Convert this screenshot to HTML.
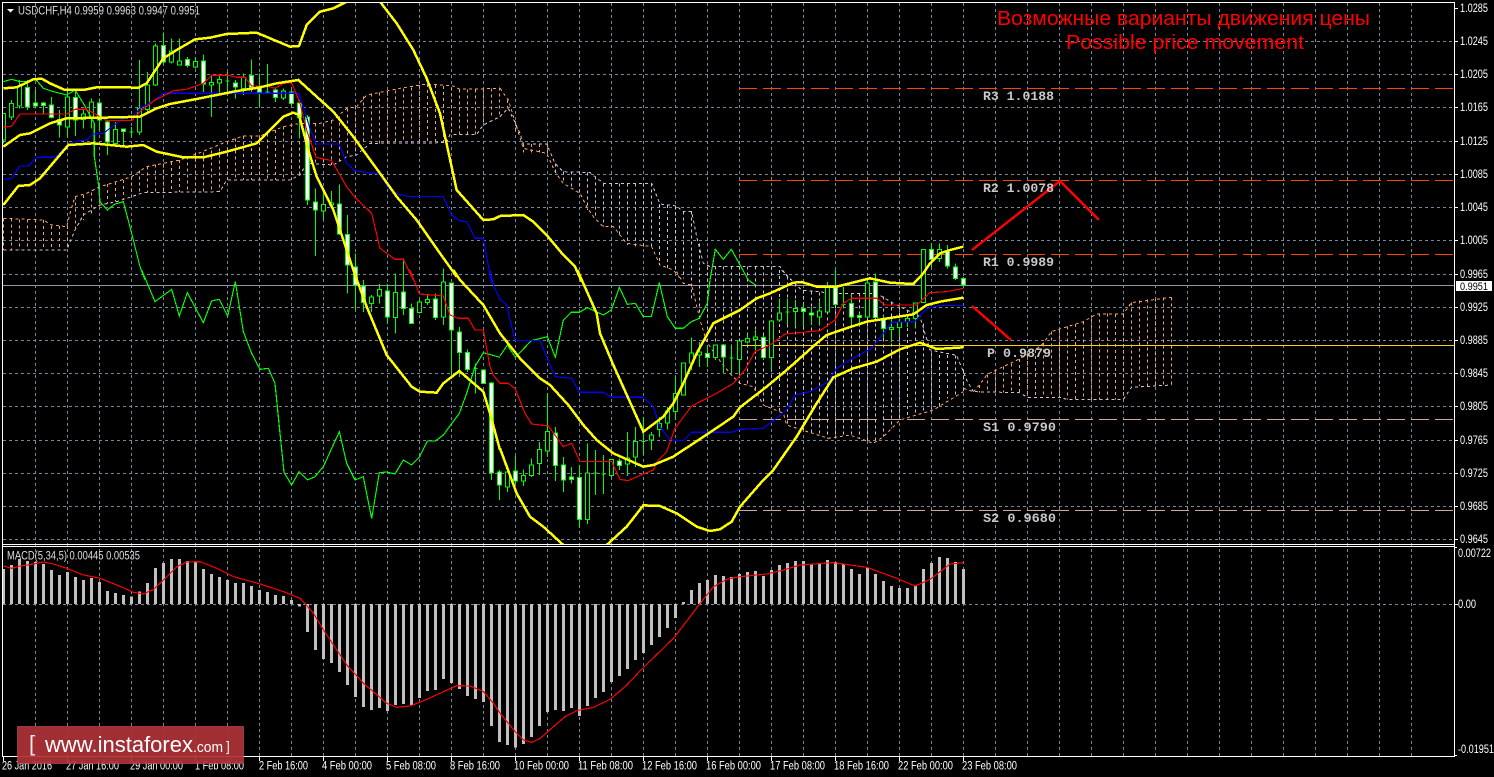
<!DOCTYPE html>
<html><head><meta charset="utf-8"><title>USDCHF H4</title>
<style>
html,body{margin:0;padding:0;background:#000;width:1494px;height:777px;overflow:hidden}
svg{display:block;position:absolute;left:0;top:0}
.y{fill:none;stroke:#ff0;stroke-width:7.5}
.r{fill:none;stroke:#f00;stroke-width:3.5}
.b{fill:none;stroke:#00f;stroke-width:3.5}
.g{fill:none;stroke:#0f0;stroke-width:3.5}
.w{fill:none;stroke:#0f0;stroke-width:3}
.wb{fill:#fff;stroke:#0f0;stroke-width:3}
.bb{fill:#000;stroke:#0f0;stroke-width:3}
.sa{fill:none;stroke:#f4a460;stroke-width:3;stroke-dasharray:9 9}
.th{fill:none;stroke:#d8bfd8;stroke-width:3;stroke-dasharray:9 9}
.m{fill:none;stroke:#c0c0c0;stroke-width:9}
.ax{font:11.5px "Liberation Sans",sans-serif;fill:#fff}
.lv{font:bold 13px "Liberation Mono",monospace;fill:#c8c8c8}
</style></head><body>
<svg width="1494" height="777" viewBox="0 0 1494 777" xmlns="http://www.w3.org/2000/svg" shape-rendering="crispEdges">
<rect width="1494" height="777" fill="#000"/>
<defs><clipPath id="c"><rect x="3" y="3" width="1451" height="541"/></clipPath></defs>
<!-- grid -->
<path fill="none" stroke="#778899" stroke-dasharray="3 3" d="M35.5 3v753m32-753v753m32-753v753m32-753v753m32-753v753m32-753v753m32-753v753m32-753v753m32-753v753m32-753v753m32-753v753m32-753v753m32-753v753m32-753v753m32-753v753m32-753v753m32-753v753m32-753v753m32-753v753m32-753v753m32-753v753m32-753v753m32-753v753m32-753v753m32-753v753m32-753v753m32-753v753m32-753v753m32-753v753m32-753v753m32-753v753m32-753v753m32-753v753m32-753v753m32-753v753m32-753v753m32-753v753m32-753v753m32-753v753m32-753v753m32-753v753m32-753v753m32-753v753m32-753v753"/>
<path fill="none" stroke="#778899" stroke-dasharray="3 3" d="M3 41.5H1454M3 74.5H1454M3 107.5H1454M3 141.5H1454M3 174.5H1454M3 207.5H1454M3 240.5H1454M3 274.5H1454M3 307.5H1454M3 340.5H1454M3 373.5H1454M3 406.5H1454M3 440.5H1454M3 473.5H1454M3 506.5H1454M3 539.5H1454M3 604.5H1454"/>
<path fill="none" stroke="#8d96a3" d="M3 285.5H1454"/>
<g clip-path="url(#c)">
<!-- pivots -->
<path fill="none" stroke="#ff4500" stroke-dasharray="18 6" d="M739 88.5H1454M739 180.5H1454M739 254.5H1454"/>
<path fill="none" stroke="#ffd700" d="M739 345.5H1454"/>
<path fill="none" stroke="#d2a89c" stroke-dasharray="18 6" d="M739 419.5H1454M739 510.5H1454"/>
<!-- cloud crop A -->
<g transform="scale(.33333)">
<path class="sa" d="M10 655L130 660L155 675L200 680L210 640L225 590L260 580L300 560L340 548L395 530L440 500L490 490L540 480L600 458L680 425L730 408L780 408L850 380L900 370L960 370L1000 360L1040 325L1070 320L1100 285L1150 275L1200 265L1280 252L1360 258L1380 268L1500 265"/>
<path class="th" d="M10 750L200 750L225 690L250 645L300 615L350 605L395 590L430 578L660 575L680 540L870 540L900 525L920 490L1000 495L1040 470L1070 465L1110 430L1340 428L1350 403L1430 403L1450 375L1500 350"/>
<path class="sa" d="M10 655V750M34 655V750M58 658V750M82 658V750M106 658V750M130 660V750M154 678V750M178 678V750M202 678V750M226 590V690M250 585V660M274 578V640M298 560V620M322 552V610M346 546V605M370 540V600M394 530V590M418 512V580M442 500V578M466 494V578M490 490V578M514 486V578M538 480V576M562 470V576M586 458V576M610 458V576M634 452V576M658 445V576M682 425V540M706 415V540M730 408V540M754 408V540M778 408V540M802 400V540M826 390V540M850 380V540M874 372V540M898 370V525M922 370V490M946 370V490M970 370V492M994 362V495M1018 350V490M1042 325V470M1066 320V465M1090 290V435M1114 280V430M1138 278V430M1162 275V428M1186 272V428M1210 265V428M1234 262V428M1258 255V428M1282 252V428M1306 255V428M1330 258V428M1354 262V403M1378 268V403M1402 268V403M1426 268V403M1450 268V375M1474 265V355M1498 262V350"/>
</g>
<!-- cloud crop G -->
<g transform="translate(500 0) scale(.33333)">
<path class="sa" d="M0 265L25 300L45 365L70 445L140 460L165 515L190 550L240 580L260 620L280 650L310 680L340 680L380 730L455 740L480 795L520 810L545 840"/>
<path class="th" d="M0 350L25 325L60 400L70 432L140 432L165 490L190 515L270 518L310 550L455 550L480 612L530 618L550 635L575 635L590 710L610 790L630 800L840 800L870 840"/>
<path class="sa" d="M22 300V325M46 365V400M70 432V458M94 432V458M118 432V458M142 432V462"/>
<path class="th" d="M166 490V520M190 515V550M214 515V565M238 515V580M262 518V630M286 530V655M310 550V680M334 550V680M358 550V710M382 550V735M406 550V740M430 550V740M454 550V740M478 612V795M502 615V805M526 618V810M550 635V835M574 635V900M598 730V950"/>
</g>
<!-- cloud crop C -->
<g transform="translate(500 270) scale(.33333)">
<path class="sa" d="M530 5L550 40L575 45L600 150L620 215L650 260L690 310L720 340L760 350L790 405L850 430L860 465L985 505L1050 495L1120 520L1150 500L1200 450L1300 420L1390 365"/>
<path class="th" d="M845 0L905 60L1000 70L1130 70L1180 100L1260 140L1290 240L1370 256L1400 330L1420 365"/>
<path class="th" d="M622 -10V215M646 -10V255M670 -10V290M694 -10V310M718 -10V340M742 -10V347M766 -10V360M790 -10V405M814 -10V418M838 0V428M862 20V465M886 40V475M910 60V480M934 65V490M958 68V498M982 70V505M1006 70V505M1030 70V500M1054 70V495M1078 70V505M1102 70V515M1126 70V520M1150 80V500M1174 95V475M1198 110V450M1222 120V440M1246 130V432M1270 160V425M1294 250V418M1318 255V408M1342 255V385M1366 256V375M1390 300V365"/>
</g>
<!-- cloud crop H -->
<g transform="translate(960 280) scale(.33333)">
<path class="sa" d="M40 335L58 315L82 283L130 260L178 237L226 210L250 190L274 155L370 125L410 102L490 102L514 68L634 52"/>
<path class="th" d="M10 290L10 325L40 335L178 338L202 352L300 352L320 358L490 358L514 322L634 315"/>
<path class="sa" d="M58 315V338M82 283V338M106 275V338M130 260V338M154 250V338M178 237V338M202 225V352M226 210V352M250 190V352M274 155V352M298 150V352M322 140V358M346 132V358M370 125V358M394 115V358M418 100V358M442 100V358M466 102V358M490 102V358M514 68V322M538 62V318M562 58V318M586 55V316M610 52V316M634 52V315"/>
</g>
<!-- candles crop A -->
<g transform="translate(.17 .17) scale(.33333)">
<path class="w" d="M10 340V430M34 300V360M58 240V325M82 240V330M106 270V325M130 305V340M154 290V355M178 330V412M202 270V410M226 265V408M250 325V385M274 295V385M298 295V390M322 360V465M346 365V435M370 385V435M394 380V410M388 395h12M418 180V405M442 215V335M466 130V258M490 97V190M514 115V190M538 115V196M562 170V202M586 170V205M610 163V275M634 225V350M658 225V280M682 215V280M676 243h12M706 240V295M730 220V285M754 178V275M778 220V320M802 192V280M796 275h12M826 265V305M850 265V300M874 270V315M898 300V415M922 345V615M946 565V768M970 565V660M994 573V620M1018 553V705M1042 645V880M1066 760V930"/>
<path class="bb" d="M4 340h12v80h-12zM28 310h12v40h-12zM52 258h12v60h-12zM196 290h12v90h-12zM244 342h12v16h-12zM268 305h12v45h-12zM340 388h12v42h-12zM412 325h12v70h-12zM436 255h12v73h-12zM460 138h12v117h-12zM508 152h12v34h-12zM532 182h12v12h-12zM580 184h12v16h-12zM628 247h12v7h-12zM652 238h12v10h-12zM724 232h12v33h-12zM844 272h12v21h-12zM964 613h12v19h-12zM988 608h12v7h-12z"/>
<path class="wb" d="M76 262h12v58h-12zM100 308h12v10h-12zM124 308h12v8h-12zM148 315h12v37h-12zM172 358h12v17h-12zM220 292h12v68h-12zM292 308h12v52h-12zM316 365h12v60h-12zM364 386h12v8h-12zM484 136h12v50h-12zM556 178h12v18h-12zM604 182h12v70h-12zM700 248h12v12h-12zM748 226h12v36h-12zM772 262h12v14h-12zM820 270h12v22h-12zM868 275h12v35h-12zM892 308h12v44h-12zM916 350h12v250h-12zM940 605h12v25h-12zM1012 612h12v90h-12zM1036 703h12v92h-12zM1060 800h12v55h-12z"/>
</g>
<!-- candles crop B -->
<g transform="translate(.17 270.17) scale(.33333)">
<path class="w" d="M1090 30V125M1114 75V125M1138 42V100M1162 42V158M1186 10V190M1210 -35V135M1234 100V162M1258 90V130M1282 75V105M1306 70V150M1330 -5V165M1354 38V315M1378 170V320M1402 238V305M1426 280V370M1420 295h12M1450 297V342M1474 335V630M1498 600V690"/>
<path class="bb" d="M1108 80h12v20h-12zM1132 58h12v19h-12zM1180 67h12v75h-12zM1252 95h12v32h-12zM1276 88h12v9h-12zM1324 35h12v105h-12z"/>
<path class="wb" d="M1084 47h12v50h-12zM1156 62h12v78h-12zM1204 65h12v50h-12zM1228 115h12v45h-12zM1300 87h12v55h-12zM1348 38h12v142h-12zM1372 185h12v62h-12zM1396 247h12v51h-12zM1444 300h12v40h-12zM1468 338h12v270h-12zM1492 605h12v40h-12z"/>
</g>
<!-- candles crop C -->
<g transform="translate(500.17 270.17) scale(.33333)">
<path class="w" d="M22 590V665M46 558V640M70 598V648M94 565V620M118 515V615M142 368V560M166 470V632M190 560V665M214 590V640M238 585V772M262 520V762M286 540V675M280 608h12M310 555V672M304 612h12M334 568V620M358 565V600M382 485V618M406 470V590M430 440V555M424 514h12M454 485V540M478 440V500M502 410V478M526 318V450M550 278V376M574 202V300M598 215V290M622 225V290M646 225V270M670 222V308M694 225V308M688 264h12M718 212V320M742 190V220M766 180V240M790 195V270M814 150V300M838 85V155M862 85V165M856 125h12M886 90V170M910 100V170M934 110V165M958 95V165M982 35V125M1006 0V108M1030 50V115M1024 103h12M1054 72V165M1078 130V170M1102 22V145M1126 10V145M1150 135V205M1174 145V215M1198 145V200M1222 140V170M1246 98V175M1270 -62V97M1294 -80V-10M1318 -80V-25M1342 -75V-5M1366 -20V30M1390 20V50"/>
<path class="bb" d="M16 605h12v45h-12zM64 616h12v16h-12zM88 584h12v32h-12zM112 538h12v42h-12zM136 484h12v58h-12zM256 608h12v140h-12zM328 568h12v48h-12zM376 563h12v19h-12zM400 514h12v46h-12zM448 494h12v16h-12zM472 460h12v18h-12zM496 422h12v36h-12zM520 370h12v54h-12zM544 278h12v96h-12zM568 248h12v30h-12zM592 246h12v8h-12zM640 225h12v37h-12zM712 212h12v56h-12zM736 205h12v10h-12zM760 200h12v8h-12zM808 152h12v110h-12zM832 128h12v22h-12zM880 115h12v9h-12zM952 122h12v18h-12zM976 50h12v75h-12zM1096 38h12v102h-12zM1168 172h12v6h-12zM1192 155h12v17h-12zM1216 145h12v10h-12zM1240 98h12v47h-12zM1264 -62h12v159h-12zM1312 -62h12v27h-12z"/>
<path class="wb" d="M40 602h12v30h-12zM160 488h12v98h-12zM184 584h12v46h-12zM208 620h12v8h-12zM232 622h12v126h-12zM352 572h12v14h-12zM616 250h12v12h-12zM664 224h12v36h-12zM784 202h12v60h-12zM904 115h12v9h-12zM928 128h12v7h-12zM1000 50h12v53h-12zM1048 100h12v40h-12zM1072 136h12v6h-12zM1120 35h12v107h-12zM1144 145h12v30h-12zM1288 -62h12v30h-12zM1336 -58h12v45h-12zM1360 -10h12v35h-12zM1384 25h12v20h-12z"/>
</g>
<!-- indicators crop A -->
<g transform="scale(.33333)">
<path class="g" d="M10 245L35 238L60 245L85 245L105 235L130 265L160 275L200 285L225 270L250 310L283 370L283 470L295 550L300 605L322 630L345 612L370 605L395 700L420 800L435 840"/>
<path class="b" d="M10 538L35 535L60 498L85 498L110 472L165 472L205 435L225 425L260 420L280 402L310 400L370 355L400 350L420 325L465 300L490 280L895 280L910 320L930 385L948 432L1018 432L1040 490L1065 512L1120 520L1140 522L1165 565L1195 583L1230 590L1330 590L1355 645L1380 663L1400 665L1425 715L1450 715L1475 850"/>
<path class="r" d="M10 382L35 378L60 342L200 342L225 328L260 328L300 350L320 362L395 362L420 335L465 300L490 288L520 272L560 268L610 250L635 226L685 226L710 232L735 232L755 258L800 258L825 265L850 250L875 248L900 310L920 390L948 472L995 482L1040 560L1065 592L1115 640L1140 745L1185 778L1210 778L1240 840"/>
<path class="y" d="M10 265L50 262L100 238L125 236L150 250L195 270L250 270L290 262L370 262L415 263L440 250L470 205L490 175L530 150L585 118L630 113L680 102L770 98L810 115L870 140L897 138L920 75L960 35L1000 25L1040 5L1090 -10L1140 5L1190 70L1240 150L1280 235L1320 340L1370 570L1450 660L1480 658L1500 648"/>
<path class="y" d="M10 440L60 405L90 400L150 370L200 355L350 352L420 350L470 325L510 312L600 295L700 275L780 262L830 250L895 240L950 290L1000 335L1060 410L1140 520L1190 590L1250 660L1320 760L1370 830"/>
<path class="y" d="M10 615L55 558L90 555L120 535L205 435L280 430L380 440L430 435L470 455L550 472L610 472L680 455L770 430L850 350L880 338L897 345L925 450L950 530L1000 630L1060 810"/>
</g>
<!-- indicators crop G -->
<g transform="translate(500 0) scale(.33333)">
<path class="y" d="M0 648L70 645L100 665L140 705L190 765L225 800L245 845"/>
</g>
<!-- indicators crop B -->
<g transform="translate(0 270) scale(.33333)">
<path class="g" d="M425 0L465 95L515 58L538 138L562 68L610 158L635 93L658 88L683 138L706 35L730 185L755 250L780 298L805 295L825 340L840 490L852 607L875 645L897 605L922 630L945 620L970 590L1018 485L1040 580L1065 630L1090 620L1115 745L1138 608L1160 606L1185 612L1210 570L1235 585L1258 562L1282 513L1306 513L1330 495L1378 430L1400 370L1425 290L1450 248L1500 262"/>
<path class="b" d="M1470 0L1480 45L1500 88"/>
<path class="r" d="M1230 0L1258 72L1330 78L1350 135L1375 145L1405 145L1425 180L1450 180L1470 290L1480 315L1500 340"/>
<path class="y" d="M1360 0L1380 30L1450 105L1500 190"/>
<path class="y" d="M1060 0L1100 110L1160 255L1235 350L1260 365L1310 368L1330 340L1378 303L1450 365L1470 430L1500 540"/>
</g>
<!-- indicators crop C -->
<g transform="translate(500 270) scale(.33333)">
<path class="g" d="M0 258L22 225L46 262L94 212L142 200L166 262L190 150L214 127L238 127L262 113L310 135L334 120L358 52L382 103L406 100L430 140L454 140L478 38L502 140L526 175L550 175L574 155L598 145L622 100L630 30L646 -62L670 -32L694 -62L745 30L766 45"/>
<path class="b" d="M0 88L20 105L45 212L120 212L165 320L215 325L238 367L310 367L335 382L430 382L460 410L480 470L510 510L550 512L575 487L695 487L720 478L790 475L860 420L885 375L930 365L985 335L1010 295L1050 270L1115 235L1150 190L1175 157L1245 155L1280 115L1320 107L1390 107"/>
<path class="r" d="M0 340L25 340L45 355L75 430L95 462L145 468L190 530L215 520L240 575L335 575L360 628L385 632L430 612L460 600L475 570L500 545L525 475L575 408L650 370L700 340L735 300L765 245L810 225L855 192L960 182L1005 150L1030 100L1055 85L1130 85L1155 105L1250 105L1290 68L1340 65L1390 55"/>
<path class="y" d="M232 0L290 130L300 190L340 285L385 385L430 485L490 440L520 400L550 340L590 250L640 160L720 120L770 85L810 70L880 38L905 36L950 50L1010 50L1090 30L1110 25L1170 38L1240 42L1270 10L1290 -20L1320 -50L1350 -60L1390 -70"/>
<path class="y" d="M0 190L60 265L120 325L150 345L205 405L250 465L290 510L340 550L430 590L460 585L520 560L630 487L700 440L720 412L800 350L860 300L950 220L980 195L1030 178L1100 155L1240 133L1280 105L1320 95L1390 83"/>
<path class="y" d="M0 535L50 670L90 740L130 770L190 825L240 880L280 880L320 825L380 770L430 706L480 708L530 730L590 770L630 783L660 778L695 755L720 710L790 630L820 600L890 500L950 400L1000 322L1060 295L1130 275L1200 238L1260 218L1310 237L1390 232"/>
</g>
<!-- arrows -->
<path fill="none" stroke="#f00" stroke-width="2.4" d="M972 250L1060 181L1099 220M972 306L1011 340"/>
</g>
<!-- MACD crop D -->
<g transform="translate(.17 540) scale(.33333)">
<path class="m" d="M10 87V192M34 75V192M58 57V192M82 63V192M106 66V192M130 72V192M154 90V192M178 105V192M202 96V192M226 111V192M250 120V192M274 114V192M298 126V192M322 153V192M346 159V192M370 165V192M394 170V192M418 155V192M442 129V192M466 84V192M490 69V192M514 57V192M538 57V192M562 63V192M586 63V192M610 87V192M634 102V192M658 111V192M682 120V192M706 129V192M730 129V192M754 138V192M778 150V192M802 156V192M826 165V192M850 168V192M874 180V192M898 192V200M922 192V276M946 192V330M970 192V357M994 192V369M1018 192V396M1042 192V435M1066 192V471M1090 192V501M1114 192V510M1138 192V504M1162 192V513M1186 192V495M1210 192V492M1234 192V495M1258 192V474M1282 192V453M1306 192V450M1330 192V417M1354 192V429M1378 192V447M1402 192V468M1426 192V477M1450 192V486M1474 192V558M1498 192V606"/>
<path class="r" d="M10 78L35 85L60 78L100 72L130 66L160 72L200 85L250 105L300 115L350 135L400 157L430 162L460 148L490 120L530 80L560 66L600 65L650 85L700 110L780 132L850 155L900 175L940 220L970 270L1010 330L1040 375L1090 430L1160 490L1190 502L1230 498L1280 478L1330 455L1370 437L1410 438L1450 455L1480 490L1500 520"/>
</g>
<!-- MACD crop E -->
<g transform="translate(500.17 540) scale(.33333)">
<path class="m" d="M22 192V615M46 192V622M70 192V612M94 192V591M118 192V558M142 192V516M166 192V510M190 192V513M214 192V504M238 192V528M262 192V498M286 192V474M310 192V456M334 192V426M358 192V408M382 192V387M406 192V360M430 192V339M454 192V315M478 192V291M502 192V264M526 192V234M550 186V192M574 150V192M598 129V192M622 120V192M646 105V192M670 108V192M694 111V192M718 102V192M742 96V192M766 93V192M790 108V192M814 90V192M838 75V192M862 69V192M886 63V192M910 63V192M934 72V192M958 72V192M982 60V192M1006 66V192M1030 72V192M1054 87V192M1078 102V192M1102 84V192M1126 102V192M1150 123V192M1174 138V192M1198 144V192M1222 144V192M1246 138V192M1270 87V192M1294 69V192M1318 51V192M1342 54V192M1366 66V192M1390 87V192"/>
<path class="r" d="M0 520L45 575L70 600L95 607L120 595L160 560L195 530L230 512L280 502L330 478L380 435L430 382L520 295L570 230L600 190L640 140L680 118L720 110L800 102L850 90L900 75L1000 68L1100 82L1190 115L1245 138L1290 118L1350 72L1390 68"/>
</g>
<!-- frame -->
<path fill="none" stroke="#fff" d="M2.5 2.5H1454.5V756.5H2.5ZM2.5 544.5H1454.5M2.5 546.5H1454.5"/>
<!-- ticks -->
<path fill="none" stroke="#fff" d="M1455 8.5h3M1455 41.5h3M1455 74.5h3M1455 107.5h3M1455 141.5h3M1455 174.5h3M1455 207.5h3M1455 240.5h3M1455 274.5h3M1455 307.5h3M1455 340.5h3M1455 373.5h3M1455 406.5h3M1455 440.5h3M1455 473.5h3M1455 506.5h3M1455 539.5h3M1455 547.5h2M1455 604.5h3M1455 755.5h2M3.5 757v4M67.5 757v4M131.5 757v4M195.5 757v4M259.5 757v4M323.5 757v4M387.5 757v4M451.5 757v4M515.5 757v4M579.5 757v4M643.5 757v4M707.5 757v4M771.5 757v4M835.5 757v4M899.5 757v4M963.5 757v4"/>
<g shape-rendering="auto">
<!-- titles -->
<text x="997" y="25" fill="#f00" font-family="Liberation Sans,sans-serif" font-size="20" textLength="373" lengthAdjust="spacingAndGlyphs">Возможные варианты движения цены</text>
<text x="1066" y="49" fill="#f00" font-family="Liberation Sans,sans-serif" font-size="20" textLength="238" lengthAdjust="spacingAndGlyphs">Possible price movement</text>
<!-- pivot labels -->
<text class="lv" x="983" y="100" textLength="71" lengthAdjust="spacingAndGlyphs">R3 1.0188</text>
<text class="lv" x="983" y="192" textLength="71" lengthAdjust="spacingAndGlyphs">R2 1.0078</text>
<text class="lv" x="983" y="266" textLength="71" lengthAdjust="spacingAndGlyphs">R1 0.9989</text>
<text class="lv" x="987" y="357" textLength="64" lengthAdjust="spacingAndGlyphs">P 0.9879</text>
<text class="lv" x="983" y="431" textLength="73" lengthAdjust="spacingAndGlyphs">S1 0.9790</text>
<text class="lv" x="983" y="522" textLength="73" lengthAdjust="spacingAndGlyphs">S2 0.9680</text>
<!-- header -->
<path d="M7 9h7l-3.5 3.5z" fill="#fff"/>
<text x="18" y="14.5" font-family="Liberation Sans,sans-serif" font-size="11.5" fill="#ddd" textLength="182" lengthAdjust="spacingAndGlyphs">USDCHF,H4  0.9959 0.9963 0.9947 0.9951</text>
<text x="7" y="559.5" font-family="Liberation Sans,sans-serif" font-size="11.5" fill="#ddd" textLength="133" lengthAdjust="spacingAndGlyphs">MACD(5,34,5) 0.00445 0.00535</text>
<!-- price axis -->
<g>
<text class="ax" x="1460" y="12" textLength="28" lengthAdjust="spacingAndGlyphs">1.0285</text>
<text class="ax" x="1460" y="45" textLength="28" lengthAdjust="spacingAndGlyphs">1.0245</text>
<text class="ax" x="1460" y="78" textLength="28" lengthAdjust="spacingAndGlyphs">1.0205</text>
<text class="ax" x="1460" y="111" textLength="28" lengthAdjust="spacingAndGlyphs">1.0165</text>
<text class="ax" x="1460" y="145" textLength="28" lengthAdjust="spacingAndGlyphs">1.0125</text>
<text class="ax" x="1460" y="178" textLength="28" lengthAdjust="spacingAndGlyphs">1.0085</text>
<text class="ax" x="1460" y="211" textLength="28" lengthAdjust="spacingAndGlyphs">1.0045</text>
<text class="ax" x="1460" y="244" textLength="28" lengthAdjust="spacingAndGlyphs">1.0005</text>
<text class="ax" x="1460" y="278" textLength="28" lengthAdjust="spacingAndGlyphs">0.9965</text>
<text class="ax" x="1460" y="311" textLength="28" lengthAdjust="spacingAndGlyphs">0.9925</text>
<text class="ax" x="1460" y="344" textLength="28" lengthAdjust="spacingAndGlyphs">0.9885</text>
<text class="ax" x="1460" y="377" textLength="28" lengthAdjust="spacingAndGlyphs">0.9845</text>
<text class="ax" x="1460" y="410" textLength="28" lengthAdjust="spacingAndGlyphs">0.9805</text>
<text class="ax" x="1460" y="444" textLength="28" lengthAdjust="spacingAndGlyphs">0.9765</text>
<text class="ax" x="1460" y="477" textLength="28" lengthAdjust="spacingAndGlyphs">0.9725</text>
<text class="ax" x="1460" y="510" textLength="28" lengthAdjust="spacingAndGlyphs">0.9685</text>
<text class="ax" x="1460" y="543" textLength="28" lengthAdjust="spacingAndGlyphs">0.9645</text>
<text class="ax" x="1458" y="557" textLength="33" lengthAdjust="spacingAndGlyphs">0.00722</text>
<text class="ax" x="1458" y="608" textLength="18" lengthAdjust="spacingAndGlyphs">0.00</text>
<text class="ax" x="1458" y="753" textLength="36" lengthAdjust="spacingAndGlyphs">-0.01951</text>
</g>
<rect x="1456" y="281" width="36" height="10" fill="#fff" shape-rendering="crispEdges"/>
<text x="1460" y="290" font-family="Liberation Sans,sans-serif" font-size="11" fill="#000" textLength="28" lengthAdjust="spacingAndGlyphs">0.9951</text>
<!-- time axis -->
<text class="ax" x="2" y="769.5" textLength="50" lengthAdjust="spacingAndGlyphs">26 Jan 2016</text>
<text class="ax" x="66" y="769.5" textLength="53" lengthAdjust="spacingAndGlyphs">27 Jan 16:00</text>
<text class="ax" x="130" y="769.5" textLength="53" lengthAdjust="spacingAndGlyphs">29 Jan 00:00</text>
<text class="ax" x="195" y="769.5" textLength="49" lengthAdjust="spacingAndGlyphs">1 Feb 08:00</text>
<text class="ax" x="259" y="769.5" textLength="49" lengthAdjust="spacingAndGlyphs">2 Feb 16:00</text>
<text class="ax" x="322" y="769.5" textLength="50" lengthAdjust="spacingAndGlyphs">4 Feb 00:00</text>
<text class="ax" x="386" y="769.5" textLength="50" lengthAdjust="spacingAndGlyphs">5 Feb 08:00</text>
<text class="ax" x="450" y="769.5" textLength="50" lengthAdjust="spacingAndGlyphs">8 Feb 16:00</text>
<text class="ax" x="514" y="769.5" textLength="55" lengthAdjust="spacingAndGlyphs">10 Feb 00:00</text>
<text class="ax" x="578" y="769.5" textLength="55" lengthAdjust="spacingAndGlyphs">11 Feb 08:00</text>
<text class="ax" x="642" y="769.5" textLength="55" lengthAdjust="spacingAndGlyphs">12 Feb 16:00</text>
<text class="ax" x="706" y="769.5" textLength="55" lengthAdjust="spacingAndGlyphs">16 Feb 00:00</text>
<text class="ax" x="770" y="769.5" textLength="55" lengthAdjust="spacingAndGlyphs">17 Feb 08:00</text>
<text class="ax" x="834" y="769.5" textLength="55" lengthAdjust="spacingAndGlyphs">18 Feb 16:00</text>
<text class="ax" x="898" y="769.5" textLength="55" lengthAdjust="spacingAndGlyphs">22 Feb 00:00</text>
<text class="ax" x="962" y="769.5" textLength="55" lengthAdjust="spacingAndGlyphs">23 Feb 08:00</text>
<!-- logo -->
<rect x="17.5" y="726.5" width="226" height="37" fill="#ac3236" fill-opacity=".93" stroke="#c0565a" stroke-opacity=".6"/>
<text x="29" y="751" font-family="Liberation Sans,sans-serif" font-size="22" fill="#eee">[</text>
<text x="45" y="752" font-family="Liberation Sans,sans-serif" font-size="22" fill="#fff" textLength="148" lengthAdjust="spacingAndGlyphs">www.instaforex</text>
<text x="193" y="752" font-family="Liberation Sans,sans-serif" font-size="15" fill="#fff" textLength="30" lengthAdjust="spacingAndGlyphs">.com</text>
<text x="226" y="751" font-family="Liberation Sans,sans-serif" font-size="14" fill="#eee">]</text>
</g>
</svg>
</body></html>
